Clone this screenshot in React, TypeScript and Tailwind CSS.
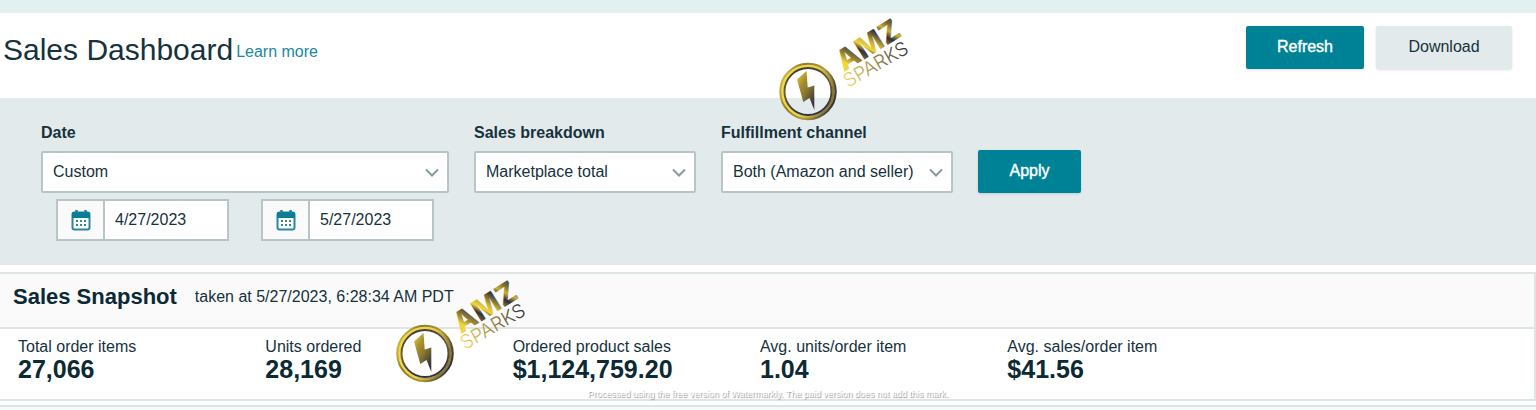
import { useState } from "react";

type Metric = {
  label: string;
  value: string;
};

const metrics: Metric[] = [
  { label: "Total order items", value: "27,066" },
  { label: "Units ordered", value: "28,169" },
  { label: "Ordered product sales", value: "$1,124,759.20" },
  { label: "Avg. units/order item", value: "1.04" },
  { label: "Avg. sales/order item", value: "$41.56" },
];

function SelectField({ id, label, options, className }: { id: string; label: string; options: string[]; className: string }) {
  return (
    <div className={className}>
      <label htmlFor={id} className="block font-bold leading-5 mb-2">{label}</label>
      <div className="relative">
        <select
          id={id}
          className="block w-full h-[42px] appearance-none rounded-xs border-2 border-[#b8c5c7] bg-white pl-[10px] pr-8 text-[#16323c]"
        >
          {options.map((o) => <option key={o}>{o}</option>)}
        </select>
        <svg className="pointer-events-none absolute right-[10px] top-4 h-3 w-[14px]" viewBox="0 0 14 12" fill="none" stroke="#879c9f" strokeWidth="2">
          <path d="M1 2.500 L7 8.500 L13 2.500" />
        </svg>
      </div>
    </div>
  );
}

function CalendarIcon() {
  return (
    <svg className="h-[22px] w-5" viewBox="0 0 20 22">
      <rect x="1.5" y="3.5" width="17" height="17" rx="2" fill="#fff" stroke="#2a86a3" strokeWidth="2" />
      <path d="M1 9V4.5Q1 3 2.500 3H17.500Q19 3 19 4.500V9Z" fill="#087f93" />
      <path d="M5.500 1V4M14.500 1V4" stroke="#20809a" strokeWidth="2.500" />
      <g fill="#2a86a3">
        {[5, 9, 13].map((x) => (
          <g key={x}>
            <rect x={x} y="11" width="2" height="2" />
            <rect x={x} y="15" width="2" height="2" />
          </g>
        ))}
      </g>
    </svg>
  );
}

function DateField({ label, value, onChange }: { label: string; value: string; onChange: (v: string) => void }) {
  return (
    <div className="flex h-[42px] w-[173px] border-2 border-[#b8c5c7] bg-white">
      <button type="button" aria-label={"Open calendar, " + label} className="flex w-[47px] shrink-0 items-center justify-center border-r-2 border-[#b8c5c7] bg-[#fafafa]">
        <CalendarIcon />
      </button>
      <input
        aria-label={label}
        value={value}
        onChange={(e) => onChange(e.target.value)}
        className="min-w-0 flex-1 px-[10px] outline-none"
      />
    </div>
  );
}

function SparksLogo({ id, className }: { id: string; className: string }) {
  return (
    <svg className={"pointer-events-none absolute h-[124px] w-[150px] " + className} viewBox="0 -12 150 124">
      <defs>
        <linearGradient id={id + "-ring"} x1="0" y1="0.2" x2="1" y2="0.6">
          <stop offset="0" stopColor="#d9c03f" />
          <stop offset="0.3" stopColor="#8d7a2c" />
          <stop offset="0.65" stopColor="#b09a38" />
          <stop offset="1" stopColor="#34333c" />
        </linearGradient>
        <linearGradient id={id + "-gold"} x1="0" y1="0" x2="1" y2="0.4">
          <stop offset="0" stopColor="#f3da45" />
          <stop offset="0.6" stopColor="#ecd347" />
          <stop offset="1" stopColor="#8b7834" />
        </linearGradient>
        <linearGradient id={id + "-inner"} x1="0" y1="0" x2="0.3" y2="1">
          <stop offset="0" stopColor="#35333a" />
          <stop offset="0.5" stopColor="#6f6130" />
          <stop offset="1" stopColor="#33323b" />
        </linearGradient>
        <linearGradient id={id + "-bolt"} x1="0" y1="0" x2="0.7" y2="1">
          <stop offset="0" stopColor="#f0d43a" />
          <stop offset="0.35" stopColor="#a8902f" />
          <stop offset="0.6" stopColor="#8a7730" />
          <stop offset="1" stopColor="#35343d" />
        </linearGradient>
        <linearGradient id={id + "-amz"} x1="0" y1="0.3" x2="1" y2="0">
          <stop offset="0" stopColor="#f0d53c" />
          <stop offset="0.1" stopColor="#a08a34" />
          <stop offset="0.28" stopColor="#33323a" />
          <stop offset="0.36" stopColor="#f0d53c" />
          <stop offset="0.46" stopColor="#c9b03a" />
          <stop offset="0.64" stopColor="#2f2f3a" />
          <stop offset="0.74" stopColor="#c9b13a" />
          <stop offset="0.84" stopColor="#7a6a30" />
          <stop offset="1" stopColor="#2c2c38" />
        </linearGradient>
        <linearGradient id={id + "-sparks"} x1="0" y1="0" x2="1" y2="0">
          <stop offset="0" stopColor="#f3dc62" />
          <stop offset="0.6" stopColor="#85763e" />
          <stop offset="1" stopColor="#2c2c38" />
        </linearGradient>
      </defs>
      <circle cx="32" cy="79.500" r="27.500" fill="none" stroke={"url(#" + id + "-ring)"} strokeWidth="2.500" />
      <circle cx="32" cy="79.500" r="25.500" fill="none" stroke={"url(#" + id + "-gold)"} strokeWidth="2.500" />
      <circle cx="32" cy="79.500" r="23.500" fill="none" stroke={"url(#" + id + "-inner)"} strokeWidth="2" />
      <path d="M21 67.500L30.500 59L31.700 75.500L38.300 73.500L38.300 98L33.500 86L27.300 90Z" fill={"url(#" + id + "-bolt)"} />
      <text transform="translate(68 60) rotate(-32)" fill={"url(#" + id + "-amz)"} className="font-['Inter',sans-serif] text-[29px] font-extrabold">AMZ</text>
      <text transform="translate(72 76) rotate(-30)" fill={"url(#" + id + "-sparks)"} className="font-['Inter',sans-serif] text-[19px] font-light">SPARKS</text>
    </svg>
  );
}

export default function App() {
  const [from, setFrom] = useState("4/27/2023");
  const [to, setTo] = useState("5/27/2023");

  return (
    <div className="relative overflow-hidden bg-white font-['Liberation_Sans',Arial,sans-serif] text-base text-[#16323c]">
      <div className="h-[13px] bg-[#e3f0f2]" />

      <header className="flex h-[85px] items-start justify-between pl-[3px] pr-6 pt-[13px]">
        <div className="flex items-center gap-[3px] pt-1">
          <h1 className="text-[30px] leading-10">Sales Dashboard</h1>
          <a href="#learn-more" className="pt-1 text-[#2087a0]">Learn more</a>
        </div>
        <div className="flex gap-3">
          <button type="button" className="h-[43px] w-[118px] rounded-xs bg-[#008296] pb-0.5 text-white shadow-sm [-webkit-text-stroke:0.4px_white]">Refresh</button>
          <button type="button" className="h-[43px] w-[136px] rounded-xs bg-[#e2eaeb] pb-0.5 shadow">Download</button>
        </div>
      </header>

      <form className="flex h-[167px] items-start gap-[25px] bg-[#e2eaec] pl-[41px] pt-[25px]" onSubmit={(e) => e.preventDefault()}>
        <div>
          <SelectField id="date" label="Date" options={["Custom"]} className="w-[408px]" />
          <div className="mt-1.5 flex gap-8 pl-[15px]">
            <DateField label="Start date" value={from} onChange={setFrom} />
            <DateField label="End date" value={to} onChange={setTo} />
          </div>
        </div>
        <SelectField id="breakdown" label="Sales breakdown" options={["Marketplace total"]} className="w-[222px]" />
        <SelectField id="channel" label="Fulfillment channel" options={["Both (Amazon and seller)"]} className="w-[232px]" />
        <button type="submit" className="mt-[27px] h-[43px] w-[103px] rounded-xs bg-[#008296] pb-0.5 text-white shadow-sm [-webkit-text-stroke:0.4px_white]">Apply</button>
      </form>

      <section className="mt-[7px] border-y-2 border-r-2 border-[#dfe4e4]">
        <div className="flex h-[55px] items-center gap-[18px] border-b-2 border-[#dfe4e4] bg-[#fafafa] pb-2 pl-[13px]">
          <h2 className="text-[22px] font-bold leading-8 text-[#0b2a33]">Sales Snapshot</h2>
          <span>taken at 5/27/2023, 6:28:34 AM PDT</span>
        </div>
        <dl className="grid h-[70px] grid-cols-6 pl-[18px] pr-8 pt-2">
          {metrics.map((m) => (
            <div key={m.label}>
              <dt className="leading-5">{m.label}</dt>
              <dd className="text-[25px] font-bold leading-6 text-[#0b2a33]">{m.value}</dd>
            </div>
          ))}
        </dl>
      </section>
      <div className="mt-1 h-[5px] border-t-2 border-[#dfe4e4] bg-[#f7fafa]" />

      <SparksLogo id="top" className="left-[776px] top-0" />
      <SparksLogo id="bottom" className="left-[393px] top-[262px]" />
      <p className="absolute inset-x-0 bottom-2 text-center text-[9px] leading-4 text-white [text-shadow:1px_1px_1px_#888]">
        Processed using the free version of Watermarkly. The paid version does not add this mark.
      </p>
    </div>
  );
}
